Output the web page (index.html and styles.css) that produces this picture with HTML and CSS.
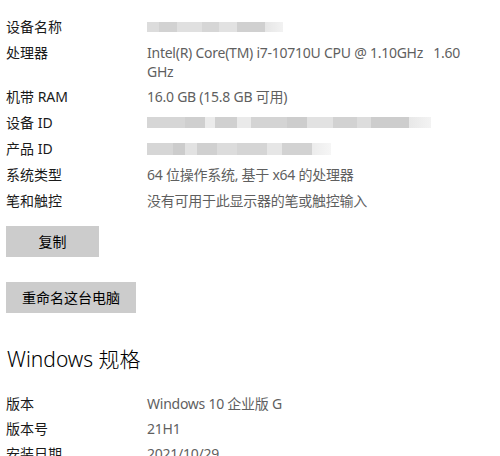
FILE: index.html
```html
<!DOCTYPE html>
<html lang="zh-CN">
<head>
<meta charset="utf-8">
<link rel="stylesheet" href="styles.css">
</head>
<body>
<div class="page">
  <div class="specs">
    <div class="label">设备名称</div><div class="value"><span class="blur bar-name"></span></div>
    <div class="label">处理器</div><div class="value wrap">Intel(R) Core(TM) i7-10710U CPU @ 1.10GHz&nbsp;&nbsp;&nbsp;1.60 GHz</div>
    <div class="label">机带 RAM</div><div class="value">16.0 GB (15.8 GB 可用)</div>
    <div class="label">设备 ID</div><div class="value"><span class="blur bar-device"></span></div>
    <div class="label">产品 ID</div><div class="value"><span class="blur bar-product"></span></div>
    <div class="label">系统类型</div><div class="value">64 位操作系统, 基于 x64 的处理器</div>
    <div class="label">笔和触控</div><div class="value">没有可用于此显示器的笔或触控输入</div>
  </div>
  <button class="btn btn-copy">复制</button>
  <button class="btn btn-rename">重命名这台电脑</button>
  <h2 class="heading">Windows 规格</h2>
  <div class="specs specs-win">
    <div class="label">版本</div><div class="value">Windows 10 企业版 G</div>
    <div class="label">版本号</div><div class="value">21H1</div>
    <div class="label">安装日期</div><div class="value">2021/10/29</div>
  </div>
</div>
</body>
</html>
```
FILE: styles.css
```css
html, body {
  margin: 0;
  padding: 0;
  background: #fff;
}
body {
  font-family: "Noto Sans", "Noto Sans CJK SC", sans-serif;
  font-size: 14px;
  color: #000;
  overflow: hidden;
}
.page {
  padding: 17px 0 0 6px;
  display: flex;
  flex-direction: column;
  align-items: flex-start;
}
.specs {
  display: grid;
  grid-template-columns: 141px 330px;
  row-gap: 6px;
  line-height: 20px;
}
.label {
  color: #1a1a1a;
}
.value {
  color: #5f5f5f;
  display: flex;
  align-items: center;
  letter-spacing: -0.25px;
}
.value.wrap {
  display: block;
  line-height: 19px;
  width: 318px;
}
.blur {
  display: block;
  filter: blur(0.6px);
}
.bar-name {
  width: 136px;
  height: 10px;
  background: linear-gradient(90deg,
    #dcdcdc 0, #dcdcdc 12px, #d2d2d2 12px, #d2d2d2 30px, #e0e0e0 30px, #e0e0e0 55px,
    #d6d6d6 55px, #d6d6d6 72px, #e2e2e2 72px, #e2e2e2 90px, #d0d0d0 90px, #d0d0d0 118px,
    #e6e6e6 118px, #f2f2f2 136px);
}
.bar-device {
  width: 284px;
  height: 11px;
  margin-top: -2px;
  background: linear-gradient(90deg,
    #d6d6d6 0, #d6d6d6 38px, #cfcfcf 38px, #cfcfcf 58px, #ebebeb 58px, #ebebeb 68px,
    #d0d0d0 68px, #d0d0d0 90px, #eaeaea 90px, #eaeaea 104px, #d4d4d4 104px, #d4d4d4 140px,
    #cdcdcd 140px, #cdcdcd 160px, #e2e2e2 160px, #e2e2e2 186px, #d2d2d2 186px, #d2d2d2 210px,
    #dddddd 210px, #dddddd 224px, #cdcdcd 224px, #cdcdcd 262px, #e8e8e8 262px, #f3f3f3 284px);
}
.bar-product {
  width: 184px;
  height: 12px;
  background: linear-gradient(90deg,
    #d6d6d6 0, #d6d6d6 26px, #cccccc 26px, #cccccc 38px, #e2e2e2 38px, #e2e2e2 50px,
    #d0d0d0 50px, #d0d0d0 70px, #dcdcdc 70px, #dcdcdc 90px, #d5d5d5 90px, #d5d5d5 120px,
    #e6e6e6 120px, #e6e6e6 135px, #d2d2d2 135px, #d2d2d2 165px, #ececec 165px, #f6f6f6 184px);
}
.btn {
  font-family: "Noto Sans CJK SC", sans-serif;
  font-size: 14px;
  color: #000;
  background: #cccccc;
  border: none;
  padding: 0;
  height: 31px;
  line-height: 31px;
}
.btn-copy {
  width: 93px;
  margin-top: 15px;
}
.btn-rename {
  width: 130px;
  margin-top: 25px;
}
.heading {
  font-family: "Noto Sans", "Noto Sans CJK SC", sans-serif;
  font-weight: 300;
  font-size: 21px;
  line-height: 28px;
  margin: 32px 0 0 1px;
  color: #000;
}
.specs-win {
  margin-top: 21px;
  row-gap: 5px;
}
```
